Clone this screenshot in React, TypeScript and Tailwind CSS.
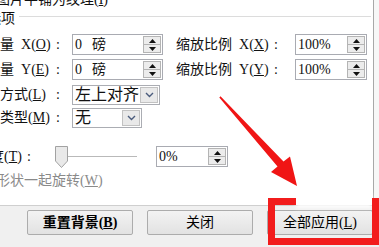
import type { ReactNode } from "react";

function Spin() {
  return (
    <div className="flex h-full w-[18px] flex-col border border-[#b4b4b4] bg-[#ececec]">
      <div className="flex flex-1 items-center justify-center border-b border-[#b4b4b4]">
        <svg width="7" height="4" viewBox="0 0 7 4">
          <path d="M3.5 0 L7 4 L0 4Z" fill="#111" />
        </svg>
      </div>
      <div className="flex flex-1 items-center justify-center">
        <svg width="7" height="4" viewBox="0 0 7 4">
          <path d="M0 0 L7 0 L3.5 4Z" fill="#111" />
        </svg>
      </div>
    </div>
  );
}

function NumBox({ w, children }: { w: string; children: ReactNode }) {
  return (
    <div className={`flex h-[21px] items-center border border-[#a9abb2] bg-white p-[1px] ${w}`}>
      <span className="flex flex-1 items-center pl-[1px] text-[14px] leading-none">{children}</span>
      <Spin />
    </div>
  );
}

function Select({ w, value }: { w: string; value: string }) {
  return (
    <div className={`flex h-[20px] items-center border border-[#abadb3] bg-white p-[1px] ${w}`}>
      <span className="flex-1 pl-[1px] text-[16px] leading-none">{value}</span>
      <div className="flex h-full w-[18px] items-center justify-center border border-[#c2c2c2] bg-[#e9e9e9]">
        <svg width="9" height="6" viewBox="0 0 9 6">
          <path d="M1 1 L4.5 4.5 L8 1" fill="none" stroke="#4b5c7d" strokeWidth="1.4" />
        </svg>
      </div>
    </div>
  );
}

function Key({ k }: { k: string }) {
  return (
    <>
      (<span className="underline underline-offset-1">{k}</span>)
    </>
  );
}

// label text in a fixed box, colon pinned right after it
function Label({ w, end, children }: { w: string; end: string; children: ReactNode }) {
  return (
    <div className={`flex shrink-0 items-center leading-none ${end}`}>
      <span className={`shrink-0 whitespace-nowrap ${w}`}>{children}</span>
      <span>:</span>
    </div>
  );
}

function Checkbox({ checked }: { checked?: boolean }) {
  return (
    <div className="flex h-[13px] w-[13px] shrink-0 items-center justify-center border border-[#8f8f8f] bg-white">
      {checked && (
        <svg width="9" height="9" viewBox="0 0 9 9">
          <path d="M1 4.5 L3.5 7 L8 1.5" fill="none" stroke="#222" strokeWidth="1.5" />
        </svg>
      )}
    </div>
  );
}

function Button({ children, bold }: { children: ReactNode; bold?: boolean }) {
  return (
    <div
      className={`flex h-[25px] w-[106px] items-center justify-center rounded-[2px] border border-[#acacac] bg-linear-to-b from-[#f3f3f3] to-[#e2e2e2] text-[14px] leading-none text-black ${
        bold ? "font-bold" : ""
      }`}
    >
      {children}
    </div>
  );
}

export default function App() {
  return (
    <div className="relative h-[247px] w-[379px] overflow-hidden bg-[#f7f7f7] font-['Liberation_Serif','Noto_Sans_CJK_SC',serif] text-[14px] text-[#111]">
      <div className="h-[205px] w-[374px] overflow-hidden border-r border-[#a8a8a8] bg-white">
        <div className="-mt-[8px] -ml-[38px] flex w-[409px] flex-col">
          {/* tile checkbox */}
          <div className="flex h-[16px] items-center gap-[7px]">
            <Checkbox checked />
            <span className="leading-none">
              将图片平铺为纹理<Key k="I" />
            </span>
          </div>

          {/* group header */}
          <div className="mt-[3px] flex h-[16px] items-start">
            <span className="-ml-[3px] leading-[16px]">平铺选项</span>
            <div className="mt-[5px] ml-[4px] h-px flex-1 bg-[#dcdcdc]" />
          </div>

          <div className="flex flex-col pl-[10px]">
            <div className="mt-[7px] flex h-[21px] items-center">
              <Label w="w-[84px]" end="w-[100px]">
                偏移量<span className="ml-[7px]">X<Key k="O" /></span>
              </Label>
              <NumBox w="w-[91px]">
                0<span className="ml-[10px]">磅</span>
              </NumBox>
              <Label w="w-[98px]" end="ml-[13px] w-[119px]">
                缩放比例<span className="ml-[7px]">X<Key k="X" /></span>
              </Label>
              <NumBox w="w-[72px]">100%</NumBox>
            </div>

            <div className="mt-[4px] flex h-[21px] items-center">
              <Label w="w-[84px]" end="w-[100px]">
                偏移量<span className="ml-[7px]">Y<Key k="E" /></span>
              </Label>
              <NumBox w="w-[91px]">
                0<span className="ml-[10px]">磅</span>
              </NumBox>
              <Label w="w-[98px]" end="ml-[13px] w-[119px]">
                缩放比例<span className="ml-[7px]">Y<Key k="Y" /></span>
              </Label>
              <NumBox w="w-[72px]">100%</NumBox>
            </div>

            <div className="mt-[5px] flex h-[20px] items-center">
              <Label w="w-[84px]" end="w-[100px]">
                对齐方式<Key k="L" />
              </Label>
              <Select w="w-[88px]" value="左上对齐" />
            </div>

            <div className="mt-[3px] flex h-[20px] items-center">
              <Label w="w-[84px]" end="w-[100px]">
                镜像类型<Key k="M" />
              </Label>
              <Select w="w-[70px]" value="无" />
            </div>
          </div>

          {/* transparency */}
          <div className="mt-[18px] flex h-[21px] items-center">
            <Label w="w-[65px]" end="w-[93px]">
              透明度<Key k="T" />
            </Label>
            <div className="relative flex h-[22px] w-[82px] items-center">
              <div className="h-px w-full bg-[#b9b9b9]" />
              <svg className="absolute top-0 left-0" width="13" height="22" viewBox="0 0 13 22">
                <path d="M0.5 0.5 H12.5 V15 L6.5 21.5 L0.5 15 Z" fill="#e9e9e9" stroke="#a2a2a2" />
              </svg>
            </div>
            <div className="ml-[19px]">
              <NumBox w="w-[72px]">0%</NumBox>
            </div>
          </div>

          {/* rotate with shape */}
          <div className="mt-[6px] flex h-[16px] items-center gap-[7px]">
            <Checkbox />
            <span className="leading-none text-[#8a8a8a]">
              与形状一起旋转<Key k="W" />
            </span>
          </div>
        </div>
      </div>

      {/* footer buttons */}
      <div className="flex h-[42px] gap-[14px] border-t border-[#cfcfcf] bg-[#f0f0f0] pt-[4px] pl-[27px]">
        <Button bold>
          重置背景<Key k="B" />
        </Button>
        <Button>关闭</Button>
        <Button>
          全部应用<Key k="L" />
        </Button>
      </div>

      {/* annotation: red box + arrow */}
      <div className="pointer-events-none absolute top-[194px] left-[296px] h-[14px] w-[76px] bg-white/90 blur-[2px]" />
      <div className="pointer-events-none absolute top-[198px] left-[268px] h-[47px] w-[111px] border-[7px] border-t-0 border-[#f21c1c]" />
      <div className="pointer-events-none absolute top-[198px] left-[268px] h-[7px] w-[28px] bg-[#f21c1c]" />
      <div className="pointer-events-none absolute top-[198px] left-[372px] h-[7px] w-[7px] bg-[#f21c1c]" />
      <svg className="pointer-events-none absolute top-0 left-0" width="379" height="247" viewBox="0 0 379 247">
        <polygon
          points="220.5,96.3 283.5,161.4 290,156.5 297,186 271,172 277.5,166.6 219.3,97.6"
          fill="#f01515"
        />
      </svg>
    </div>
  );
}
